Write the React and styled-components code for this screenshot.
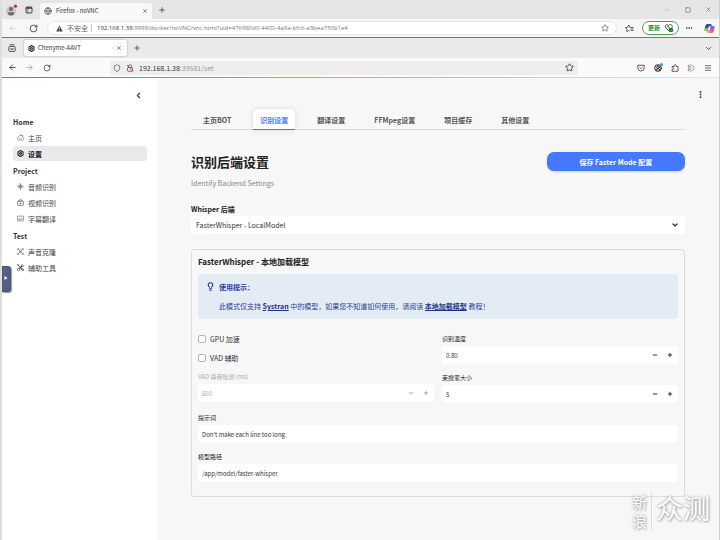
import React, { useState } from 'react';
import styled, { createGlobalStyle, css } from 'styled-components';
import {
    ArrowLeft,
    ArrowRight,
    ChevronDown,
    ChevronLeft,
    CircleUserRound,
    Ellipsis,
    EllipsisVertical,
    Globe,
    Lightbulb,
    Menu,
    Minus,
    Plus,
    RotateCw,
    Shield,
    Square,
    Star,
    X,
} from 'lucide-react';
import { BsHouseDoor, BsTools } from 'react-icons/bs';

const menu = [
    {
        title: 'Home',
        items: [
            { name: '主页', Icon: BsHouseDoor },
            { name: '设置', Icon: GearIcon, active: true },
        ],
    },
    {
        title: 'Project',
        items: [
            { name: '音频识别', Icon: SoundIcon },
            { name: '视频识别', Icon: VideoIcon },
            { name: '字幕翻译', Icon: SubtitleIcon },
        ],
    },
    {
        title: 'Test',
        items: [
            { name: '声音克隆', Icon: CloneIcon },
            { name: '辅助工具', Icon: BsTools },
        ],
    },
];

const tabs = ['主页BOT', '识别设置', '翻译设置', 'FFMpeg设置', '项目缓存', '其他设置'];

function GearIcon({ size = 7 }) {
    return (
        <svg width={size} height={size} viewBox="0 0 16 16" fill="none" stroke="#222" strokeWidth="2.4">
            <path d="M8 1.3 13.8 4.6V11.4L8 14.7 2.2 11.4V4.6Z" strokeLinejoin="round" />
            <circle cx="8" cy="8" r="2.2" />
        </svg>
    );
}

function SoundIcon({ size = 7 }) {
    return (
        <svg width={size} height={size} viewBox="0 0 16 16" fill="none" stroke="currentColor" strokeWidth="1.5">
            <path d="M8 1.5v13M5.3 5v6M10.7 5v6M2.6 7v2M13.4 7v2" strokeLinecap="round" />
        </svg>
    );
}

function VideoIcon({ size = 7 }) {
    return (
        <svg width={size} height={size} viewBox="0 0 16 16" fill="none" stroke="currentColor" strokeWidth="1.5">
            <rect x="1.5" y="5" width="13" height="9.5" rx="1.5" />
            <path d="M4 5V3.5L8 1.5l4 2V5" />
            <path d="M6.5 7.2v5L10.5 9.7Z" fill="currentColor" stroke="none" />
        </svg>
    );
}

function SubtitleIcon({ size = 7 }) {
    return (
        <svg width={size} height={size} viewBox="0 0 16 16" fill="none" stroke="currentColor" strokeWidth="1.2">
            <rect x="1" y="2.5" width="14" height="11" rx="1" />
            <path d="M3.5 7.5h2M7.5 7.5h5M3.5 10.5h6M11 10.5h1.5" />
        </svg>
    );
}

function CloneIcon({ size = 7 }) {
    return (
        <svg width={size} height={size} viewBox="0 0 16 16" fill="none" stroke="currentColor" strokeWidth="1.3">
            <path d="M1.5 5V1.5H5M11 1.5h3.5V5M14.5 11v3.5H11M5 14.5H1.5V11" />
            <circle cx="8" cy="6.2" r="2.4" />
            <path d="M3.5 13.5 6.3 9h3.4l2.8 4.5M3.5 3.5l2 1.5M12.5 3.5l-2 1.5" />
        </svg>
    );
}

const Avatar = () => (
    <svg width="12" height="12" viewBox="0 0 12 12">
        <circle cx="5" cy="7" r="5" fill="#c9c6c4" />
        <circle cx="5" cy="5" r="2.1" fill="#716d6b" />
        <path d="M1.6 10C2 7.4 8 7.4 8.4 10A5 5 0 0 1 1.6 10Z" fill="#716d6b" />
        <circle cx="9.5" cy="2.2" r="1.6" fill="#e02222" />
    </svg>
);

const WorkspaceIcon = () => (
    <svg width="8" height="8" viewBox="0 0 8 8" fill="none" stroke="#333" strokeWidth=".9">
        <rect x="1" y="1" width="6" height="6" rx="1" />
        <path d="M1 2h6" strokeWidth="1.4" />
        <path d="M2.8 2v5" strokeWidth=".6" />
    </svg>
);

const FirefoxViewIcon = () => (
    <svg width="8" height="8" viewBox="0 0 8 8" fill="none" stroke="#444" strokeWidth=".9">
        <rect x=".8" y="2.4" width="6.4" height="5" rx="1" />
        <path d="M1.6.8h4.8M2.8 4.2v1h2.4v-1" />
    </svg>
);

const WarnIcon = () => (
    <svg width="7" height="7" viewBox="0 0 14 14">
        <path d="M7 1 13.6 13H.4Z" fill="#444" />
        <path d="M7 5v4M7 10.3v1.4" stroke="#fff" strokeWidth="1.4" />
    </svg>
);

const LockIcon = () => (
    <svg width="8" height="8" viewBox="0 0 16 16" fill="none" strokeWidth="1.6">
        <rect x="3" y="7" width="10" height="7.5" rx="1.2" stroke="#555" />
        <path d="M5 7V4.5a3 3 0 0 1 6 0V7" stroke="#555" />
        <path d="M2 2 14 15" stroke="#e22850" strokeWidth="1.9" />
    </svg>
);

const FavoritesIcon = () => (
    <svg width="9" height="9" viewBox="0 0 18 18" fill="none" stroke="#333" strokeWidth="1.5" strokeLinejoin="round">
        <path d="M12.5 7 9.7 6.5 7.5 2 5.3 6.5.9 7.2l3.2 3.2-.8 4.8 4.2-2.2 2 1" />
        <path d="M12 7h5M11 10h6M12 13h5" />
    </svg>
);

const HealthIcon = () => (
    <svg width="10" height="10" viewBox="0 0 20 20" fill="none">
        <path d="M9.5 15.5 3 9C.5 5 5.5 1 9.5 5 13.5 1 18.5 5 16 9Z" stroke="#333" strokeWidth="1.7" />
        <path d="m5 8 3-2 4 5M8 9l3 3" stroke="#333" strokeWidth="1.3" />
        <circle cx="14" cy="14" r="4.6" fill="#16791b" />
        <path d="m11.8 14 1.6 1.6 3-3" stroke="#a9dba5" strokeWidth="1.1" />
    </svg>
);

const CopilotIcon = () => (
    <svg width="11" height="11" viewBox="0 0 22 22">
        <path d="M7 2h7l2 4-4 1-3 9H4C0 16 1 12 2 9Z" fill="#2b8fe6" />
        <path d="M7 2h7l1 3H9L6 12 2 9C3 5 4 2 7 2Z" fill="#26489f" />
        <path d="M2 10h6l-1 6H4C0 16 1 13 2 10Z" fill="#8fc742" />
        <path d="M15 20H8l-2-4h4l3-9h5c4 0 3 4 2 7-1 4-2 6-5 6Z" fill="#e8508f" />
        <path d="M12 10l1-4h5c4 0 3 3 2 6Z" fill="#9955dc" />
        <path d="M6 16h7l2 4H8Z" fill="#f5a02f" />
        <path d="M10 7h3l-2 8H8Z" fill="#fff" />
    </svg>
);

const PocketIcon = () => (
    <svg width="8" height="8" viewBox="0 0 16 16" fill="none" stroke="#444" strokeWidth="1.7">
        <path d="M1.5 2.5h13v5a6.5 6.5 0 0 1-13 0Z" strokeLinejoin="round" />
        <path d="m5 6.5 3 3 3-3" />
    </svg>
);

const ExtensionIcon = () => (
    <svg width="8" height="8" viewBox="0 0 16 16" fill="none" stroke="#444" strokeWidth="1.7" strokeLinejoin="round">
        <path d="M2 14.5V11h1.5a1.8 1.8 0 0 0 0-3.6H2V5h4.5V3.3a2 2 0 0 1 4 0V5H14v9.500Z" />
    </svg>
);

const TabSyncIcon = () => (
    <svg width="8" height="8" viewBox="0 0 16 16" fill="none" stroke="#999" strokeWidth="1.5">
        <path d="M3 2h6l5 3v6l-5 3H3Z" />
        <path d="M1 5h7M3 8h8M1 11h7" />
    </svg>
);

const App = () => {
    const [tab, setTab] = useState('识别设置');
    const [temperature, setTemperature] = useState(0.8);
    const [beam, setBeam] = useState(5);
    const [prompt, setPrompt] = useState("Don't make each line too long.");
    const [path, setPath] = useState('/app/model/faster-whisper');

    return (
        <Window>
            <GlobalStyle />
            <TitleBar>
                <IconButton aria-label="Profile" $width={18}>
                    <Avatar />
                </IconButton>
                <IconButton aria-label="Workspaces" $width={16}>
                    <WorkspaceIcon />
                </IconButton>
                <EdgeTab>
                    <Globe size={8} color="#444" />
                    <TabName>Firefox - noVNC</TabName>
                    <X size={6} />
                </EdgeTab>
                <IconButton aria-label="New tab" $width={20}>
                    <Plus size={8} />
                </IconButton>
                <WindowButtons>
                    <IconButton aria-label="Minimize" $width={21}>
                        <Minus size={6} color="#999" />
                    </IconButton>
                    <IconButton aria-label="Maximize" $width={21}>
                        <Square size={6} color="#555" />
                    </IconButton>
                    <IconButton aria-label="Close" $width={21}>
                        <X size={7} color="#555" />
                    </IconButton>
                </WindowButtons>
            </TitleBar>

            <EdgeToolbar>
                <IconButton aria-label="Back" $width={21}>
                    <ArrowLeft size={9} color="#ccc" />
                </IconButton>
                <IconButton aria-label="Refresh" $width={21}>
                    <RotateCw size={9} />
                </IconButton>
                <EdgeAddress>
                    <WarnIcon />
                    <Insecure>不安全</Insecure>
                    <EdgeUrl>
                        <b>192.168.1.38</b>:9999/docker/noVNC/vnc.html?uid=476980d0-4400-4a9a-bfc6-a3bea750b1e4
                    </EdgeUrl>
                    <Star size={8} color="#555" />
                </EdgeAddress>
                <IconButton aria-label="Favorites" $width={25}>
                    <FavoritesIcon />
                </IconButton>
                <UpdateButton>
                    更新
                    <HealthIcon />
                </UpdateButton>
                <IconButton aria-label="More" $width={20}>
                    <Ellipsis size={8} />
                </IconButton>
                <IconButton aria-label="Copilot" $width={20}>
                    <CopilotIcon />
                </IconButton>
            </EdgeToolbar>

            <FirefoxTabs>
                <IconButton aria-label="Firefox view" $width={19}>
                    <FirefoxViewIcon />
                </IconButton>
                <FirefoxTab>
                    <GearIcon />
                    <TabName>Chenyme-AAVT</TabName>
                    <X size={6} />
                </FirefoxTab>
                <IconButton aria-label="New tab" $width={20}>
                    <Plus size={8} />
                </IconButton>
                <WindowButtons>
                    <IconButton aria-label="List tabs" $width={21}>
                        <ChevronDown size={9} />
                    </IconButton>
                </WindowButtons>
            </FirefoxTabs>

            <FirefoxToolbar>
                <IconButton aria-label="Back" $width={17}>
                    <ArrowLeft size={9} />
                </IconButton>
                <IconButton aria-label="Forward" $width={17}>
                    <ArrowRight size={9} color="#999" />
                </IconButton>
                <IconButton aria-label="Reload" $width={17}>
                    <RotateCw size={8} />
                </IconButton>
                <FirefoxAddress>
                    <Shield size={8} color="#444" />
                    <LockIcon />
                    <FirefoxUrl>
                        192.168.1.38<span>:39581/set</span>
                    </FirefoxUrl>
                    <Star size={9} />
                </FirefoxAddress>
                <IconButton aria-label="Pocket" $width={17}>
                    <PocketIcon />
                </IconButton>
                <IconButton aria-label="Account" $width={17}>
                    <CircleUserRound size={8} strokeWidth={3} />
                    <SyncDot />
                </IconButton>
                <IconButton aria-label="Extensions" $width={17}>
                    <ExtensionIcon />
                </IconButton>
                <IconButton aria-label="Sync" $width={16}>
                    <TabSyncIcon />
                </IconButton>
                <IconButton aria-label="Menu" $width={17}>
                    <Menu size={8} />
                </IconButton>
            </FirefoxToolbar>
            <LoadingLine />

            <Page>
                <Sidebar>
                    <SidebarTop>
                        <IconButton aria-label="Collapse sidebar" $width={9}>
                            <ChevronLeft size={9} strokeWidth={3} />
                        </IconButton>
                    </SidebarTop>
                    {menu.map((group) => (
                        <React.Fragment key={group.title}>
                            <MenuTitle>{group.title}</MenuTitle>
                            {group.items.map(({ name, Icon, active }) => (
                                <MenuLink key={name} href="#" $active={active}>
                                    <Icon size={7} />
                                    {name}
                                </MenuLink>
                            ))}
                        </React.Fragment>
                    ))}
                </Sidebar>

                <Main>
                    <MainHeader>
                        <IconButton aria-label="Options" $width={10}>
                            <EllipsisVertical size={9} strokeWidth={3} />
                        </IconButton>
                    </MainHeader>
                    <Content>
                        <TabList role="tablist">
                            {tabs.map((name) => (
                                <TabButton
                                    key={name}
                                    role="tab"
                                    aria-selected={tab === name}
                                    $active={tab === name}
                                    onClick={() => setTab(name)}
                                >
                                    {name}
                                </TabButton>
                            ))}
                        </TabList>

                        <HeadingRow>
                            <Heading>识别后端设置</Heading>
                            <SaveButton>保存 Faster Mode 配置</SaveButton>
                        </HeadingRow>
                        <Caption>Identify Backend Settings</Caption>

                        <Field>
                            <Label htmlFor="backend" $bold>
                                Whisper 后端
                            </Label>
                            <SelectBox>
                                <Select id="backend">
                                    <option>FasterWhisper - LocalModel</option>
                                </Select>
                                <ChevronDown size={8} strokeWidth={4} />
                            </SelectBox>
                        </Field>

                        <Card>
                            <CardTitle>FasterWhisper - 本地加载模型</CardTitle>
                            <Notice>
                                <Lightbulb size={9} strokeWidth={3} />
                                <NoticeText>
                                    <strong>使用提示：</strong>
                                    <p>
                                        此模式仅支持 <a href="#">Systran</a> 中的模型，如果您不知道如何使用，请阅读{' '}
                                        <a href="#">本地加载模型</a> 教程！
                                    </p>
                                </NoticeText>
                            </Notice>

                            <Columns>
                                <Stack>
                                    <CheckLabel>
                                        <Checkbox type="checkbox" />
                                        GPU 加速
                                    </CheckLabel>
                                    <CheckLabel>
                                        <Checkbox type="checkbox" />
                                        VAD 辅助
                                    </CheckLabel>
                                    <NumberField id="silence" label="VAD 静音检测 (ms)" value="500" disabled />
                                </Stack>
                                <Stack>
                                    <NumberField
                                        id="temperature"
                                        label="识别温度"
                                        value={temperature.toFixed(2)}
                                        onStep={(n) => setTemperature(temperature + n * 0.1)}
                                    />
                                    <NumberField
                                        id="beam"
                                        label="束搜索大小"
                                        value={beam}
                                        onStep={(n) => setBeam(beam + n)}
                                    />
                                </Stack>
                            </Columns>

                            <Stack>
                                <Field>
                                    <Label htmlFor="prompt">提示词</Label>
                                    <InputBox>
                                        <Input id="prompt" value={prompt} onChange={(e) => setPrompt(e.target.value)} />
                                    </InputBox>
                                </Field>
                                <Field>
                                    <Label htmlFor="path">模型路径</Label>
                                    <InputBox>
                                        <Input id="path" value={path} onChange={(e) => setPath(e.target.value)} />
                                    </InputBox>
                                </Field>
                            </Stack>
                        </Card>
                    </Content>
                </Main>
            </Page>

            <VncHandle aria-label="Control bar">
                <svg width="8" height="24" viewBox="0 0 8 24">
                    {[3, 6, 9, 15, 18, 21].map((y) => (
                        <path key={y} d={`M1.5 ${y}h5`} stroke="#7f8bab" strokeWidth=".7" strokeDasharray="1 1" />
                    ))}
                    <path d="M2.5 10v4L5.5 12Z" fill="#fff" />
                </svg>
            </VncHandle>
            <Watermark>
                <WatermarkSmall>新浪</WatermarkSmall>
                <WatermarkLarge>众测</WatermarkLarge>
            </Watermark>
        </Window>
    );
};

const NumberField = ({ id, label, value, disabled, onStep }) => (
    <Field>
        <Label htmlFor={id} $disabled={disabled}>
            {label}
        </Label>
        <InputBox $disabled={disabled}>
            <Input id={id} value={value} inputMode="decimal" readOnly disabled={disabled} />
            <StepButton aria-label="减少" disabled={disabled} onClick={() => onStep(-1)}>
                <Minus size={6} strokeWidth={4} />
            </StepButton>
            <StepButton aria-label="增加" disabled={disabled} onClick={() => onStep(1)}>
                <Plus size={6} strokeWidth={4} />
            </StepButton>
        </InputBox>
    </Field>
);

const GlobalStyle = createGlobalStyle`
    * {
        box-sizing: border-box;
    }
    body {
        margin: 0;
        color: #31333f;
        font-family: 'Noto Sans CJK SC', sans-serif;
        font-size: 7px;
        line-height: 10px;
    }
    h1, h2, p {
        margin: 0;
    }
    button, input, select {
        font: inherit;
        color: inherit;
        border: 0;
        padding: 0;
        margin: 0;
        background: none;
    }
    svg {
        flex: none;
    }
`;

const Window = styled.div`
    position: relative;
    display: flex;
    flex-direction: column;
    min-height: 100vh;
    border-left: 2px solid #dedede;
    border-right: 1px solid #cfcfcf;
    background-color: #f7f7f7;
`;

const bar = css`
    display: flex;
    align-items: center;
    color: #222;
`;

const IconButton = styled.button`
    position: relative;
    display: flex;
    flex: none;
    align-items: center;
    justify-content: center;
    width: ${(props) => props.$width}px;
    height: 14px;
`;

const TitleBar = styled.div`
    ${bar}
    height: 19px;
    padding-left: 1px;
    background-color: #e6e6e6;
`;

const EdgeTab = styled.div`
    ${bar}
    align-self: flex-end;
    gap: 4px;
    width: 112px;
    height: 16px;
    margin-left: 3px;
    padding: 0 4px;
    border-radius: 3px 3px 0 0;
    background-color: #f8f8f8;
    font-size: 6px;
`;

const TabName = styled.span`
    flex: 1;
    color: #333;
`;

const WindowButtons = styled.div`
    display: flex;
    margin-left: auto;
`;

const EdgeToolbar = styled.div`
    ${bar}
    height: 19px;
    border-bottom: 1px solid #777;
    background-color: #f7f7f7;
`;

const EdgeAddress = styled.div`
    ${bar}
    flex: 1;
    gap: 4px;
    height: 14px;
    margin-left: 3px;
    padding: 0 7px 0 8px;
    border: 1px solid #e8e8e8;
    border-radius: 7px;
    background-color: #fff;
`;

const Insecure = styled.span`
    padding-right: 3px;
    border-right: 1px solid #ccc;
    color: #666;
    line-height: 8px;
`;

const EdgeUrl = styled.span`
    flex: 1;
    margin-left: 1px;
    color: #777;
    font-family: 'Open Sans', sans-serif;
    font-size: 6px;
    white-space: nowrap;

    b {
        color: #333;
        font-weight: 500;
    }
`;

const UpdateButton = styled.button`
    ${bar}
    gap: 4px;
    height: 14px;
    padding: 0 4px 0 5px;
    border: 1px solid #4ba04b;
    border-radius: 7px;
    background-color: #fff;
    color: #2c862c;
    font-size: 6px;
    font-weight: 700;
`;

const FirefoxTabs = styled.div`
    ${bar}
    height: 20px;
    background-color: #eaeaea;
`;

const FirefoxTab = styled.div`
    ${bar}
    gap: 3px;
    width: 103px;
    height: 16px;
    margin-left: 3px;
    padding: 0 5px 0 4px;
    border-radius: 2px;
    background-color: #fff;
    box-shadow: 0 0 2px rgba(0, 0, 0, 0.35);
    font-size: 6px;
`;

const FirefoxToolbar = styled.div`
    ${bar}
    height: 19px;
    padding: 0 3px 0 2px;
    background-color: #fafafa;
`;

const FirefoxAddress = styled.div`
    ${bar}
    flex: 1;
    gap: 5px;
    height: 14px;
    margin: 0 54px 0 55px;
    padding: 0 4px 0 3px;
    border-radius: 2px;
    background-color: #eee;
`;

const FirefoxUrl = styled.span`
    flex: 1;
    color: #333;

    span {
        color: #999;
    }
`;

const SyncDot = styled.i`
    position: absolute;
    top: 2px;
    right: 3px;
    width: 3px;
    height: 3px;
    border-radius: 50%;
    background-color: #2a9df4;
`;

const LoadingLine = styled.div`
    height: 1px;
    background: linear-gradient(90deg, #e0523f, #eda05c 50%, #f7f08a);
`;

const Page = styled.div`
    display: flex;
    flex: 1;
`;

const Sidebar = styled.nav`
    display: flex;
    flex: none;
    flex-direction: column;
    gap: 1px;
    width: 156px;
    padding: 0 11px;
    background-color: #fff;
`;

const SidebarTop = styled.div`
    display: flex;
    justify-content: flex-end;
    height: 34px;
    padding: 10px 4px 0 0;
`;

const MenuTitle = styled.div`
    padding-top: 2px;
    font-weight: 700;
    line-height: 14px;
`;

const MenuLink = styled.a`
    display: flex;
    align-items: center;
    gap: 4px;
    height: 15px;
    padding-left: 4px;
    border-radius: 3px;
    background-color: ${(props) => (props.$active ? '#eaeaea' : 'transparent')};
    color: ${(props) => (props.$active ? '#111' : '#444')};
    font-weight: ${(props) => (props.$active ? 700 : 400)};
    text-decoration: none;
`;

const Main = styled.main`
    flex: 1;
    min-width: 0;
`;

const MainHeader = styled.div`
    display: flex;
    justify-content: flex-end;
    height: 31px;
    padding: 9px 14px 0 0;
`;

const Content = styled.div`
    padding: 0 34px 43px 33px;
`;

const TabList = styled.div`
    display: flex;
    gap: 15px;
    height: 21px;
    padding-left: 5px;
    border-bottom: 1px solid #dcdcdc;
`;

const TabButton = styled.button`
    height: 21px;
    padding: 0 7px;
    border-radius: 5px 5px 0 0;
    color: #555;
    font-weight: 700;

    ${(props) =>
        props.$active &&
        css`
            background-color: #fff;
            box-shadow: inset 0 -1px 0 #4577ff, 0 0 5px rgba(0, 0, 0, 0.12);
            color: #4577ff;
        `}
`;

const HeadingRow = styled.div`
    display: flex;
    align-items: center;
    justify-content: space-between;
    margin-top: 22px;
`;

const Heading = styled.h1`
    color: #222;
    font-size: 13px;
    line-height: 19px;
`;

const SaveButton = styled.button`
    width: 28%;
    height: 19px;
    border-radius: 7px;
    background-color: #4577ff;
    box-shadow: 0 1px 2px rgba(0, 0, 0, 0.15);
    color: #fff;
    font-weight: 700;
`;

const Caption = styled.p`
    margin: 7px 0 16px;
    color: #888;
`;

const Field = styled.div`
    display: flex;
    flex-direction: column;
    gap: 2px;
`;

const Label = styled.label`
    color: ${(props) => (props.$disabled ? '#aaa' : '#222')};
    font-size: ${(props) => (props.$bold ? 7 : 6)}px;
    font-weight: ${(props) => (props.$bold ? 700 : 400)};
`;

const InputBox = styled.div`
    display: flex;
    align-items: center;
    height: 18px;
    padding-right: 1px;
    border-radius: 3px;
    background-color: #fff;
    color: ${(props) => (props.$disabled ? '#aaa' : '#333')};
`;

const Input = styled.input`
    flex: 1;
    min-width: 0;
    height: 18px;
    padding: 0 4px;
    outline: none;
    font-size: 6px;
`;

const StepButton = styled.button`
    display: flex;
    align-items: center;
    justify-content: center;
    width: 15px;
    height: 18px;
`;

const SelectBox = styled(InputBox)`
    padding-right: 6px;
`;

const Select = styled.select`
    flex: 1;
    height: 18px;
    padding: 0 5px;
    appearance: none;
    outline: none;
`;

const Card = styled.section`
    margin-top: 15px;
    padding: 7px 6px 14px;
    border: 1px solid #dcdcdc;
    border-radius: 3px;
`;

const CardTitle = styled.h2`
    color: #222;
    font-size: 8px;
`;

const Notice = styled.div`
    display: flex;
    gap: 4px;
    margin-top: 7px;
    padding: 8px;
    border-radius: 4px;
    background-color: #e3ebf5;
    color: #2a4192;
`;

const NoticeText = styled.div`
    display: flex;
    flex-direction: column;
    gap: 9px;

    a {
        color: #1c3387;
        font-weight: 700;
    }
`;

const Columns = styled.div`
    display: grid;
    grid-template-columns: 1fr 1fr;
    gap: 8px;
    margin: 15px 0 10px;
`;

const Stack = styled.div`
    display: flex;
    flex-direction: column;
    gap: 9px;
`;

const CheckLabel = styled.label`
    display: flex;
    align-items: center;
    gap: 4px;
`;

const Checkbox = styled.input`
    width: 8px;
    height: 8px;
    appearance: none;
    border: 1px solid #b4b4b8;
    border-radius: 2px;
    background-color: #fff;

    &:checked {
        background-color: #4577ff;
    }
`;

const VncHandle = styled.button`
    position: absolute;
    top: 266px;
    left: 0;
    display: flex;
    width: 9px;
    height: 26px;
    border-radius: 0 3px 3px 0;
    background-color: #4f5c7e;
    box-shadow: 1px 1px 1px rgba(0, 0, 0, 0.4);
`;

const Watermark = styled.div`
    position: absolute;
    right: 9px;
    bottom: 10px;
    display: flex;
    align-items: flex-start;
    gap: 4px;
    color: #fff;
    text-shadow: 0 0 3px #999, 1px 1px 2px #bbb;
`;

const WatermarkSmall = styled.span`
    width: 20px;
    padding-right: 4px;
    border-right: 1px solid #ddd;
    font-size: 15px;
    line-height: 19px;
`;

const WatermarkLarge = styled.span`
    font-size: 27px;
    line-height: 32px;
`;

export default App;
